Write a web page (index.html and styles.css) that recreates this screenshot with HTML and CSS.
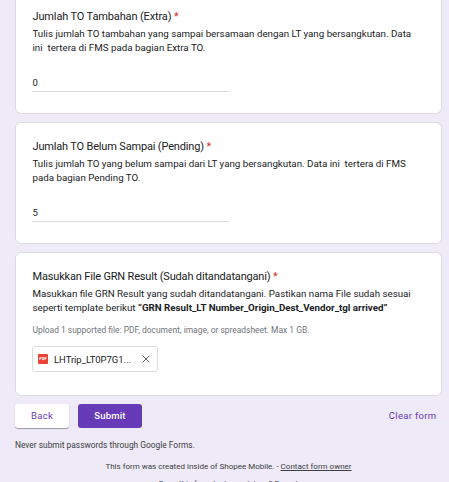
FILE: index.html
```html
<!DOCTYPE html>
<html lang="id">
<head>
<meta charset="utf-8">
<title>Form</title>
<link rel="stylesheet" href="styles.css">
</head>
<body>
<main class="form">
  <section class="card card-first">
    <h2 class="title title-extra">Jumlah TO Tambahan (Extra) <span class="req">*</span></h2>
    <p class="desc">Tulis jumlah TO tambahan yang sampai bersamaan dengan LT yang bersangkutan. Data<br>ini&nbsp; tertera di FMS pada bagian Extra TO.</p>
    <div class="answer">0</div>
  </section>
  <section class="card card-second">
    <h2 class="title">Jumlah TO Belum Sampai (Pending) <span class="req">*</span></h2>
    <p class="desc">Tulis jumlah TO yang belum sampai dari LT yang bersangkutan. Data ini&nbsp; tertera di FMS<br>pada bagian Pending TO.</p>
    <div class="answer">5</div>
  </section>
  <section class="card card-third">
    <h2 class="title">Masukkan File GRN Result (Sudah ditandatangani) <span class="req">*</span></h2>
    <p class="desc">Masukkan file GRN Result yang sudah ditandatangani. Pastikan nama File sudah sesuai<br>seperti template berikut <b>“GRN Result_LT Number_Origin_Dest_Vendor_tgl arrived”</b></p>
    <p class="hint">Upload 1 supported file: PDF, document, image, or spreadsheet. Max 1 GB.</p>
    <div class="file">
      <span class="pdf">PDF</span>
      <span class="name">LHTrip_LT0P7G1...</span>
      <svg class="close" viewBox="0 0 8 8"><path d="M.6.6l6.8 6.8M7.4.6L.6 7.4"/></svg>
    </div>
  </section>
  <div class="actions">
    <button class="btn back">Back</button>
    <button class="btn submit">Submit</button>
    <a class="clear">Clear form</a>
  </div>
  <p class="note">Never submit passwords through Google Forms.</p>
  <p class="origin">This form was created inside of Shopee Mobile. - <a class="owner">Contact form owner</a></p>
  <p class="report">Does this form look suspicious? Report</p>
</main>
</body>
</html>
```
FILE: styles.css
```css
* { box-sizing: border-box; }
html, body { height: 100%; overflow: hidden; }
body { margin: 0; background: #eeeaf7; color: #202124; font-family: Roboto, "Liberation Sans", sans-serif; }
h2, p { margin: 0; font-weight: 400; white-space: nowrap; }
.form { width: 427px; margin-left: 15px; }
.card { background: #fff; border: 1px solid #dadce0; border-radius: 6px; padding: 16px 16px 0; margin-bottom: 8px; }
.card-first { height: 114px; border-top: 0; border-radius: 0 0 6px 6px; padding-top: 9px; }
.card-second { height: 122px; }
.card-third { height: 144px; margin-bottom: 7px; }
.title, .desc, .hint { padding-left: .5px; }
.title { font-size: 11px; line-height: 15px; letter-spacing: -.17px; }
.title-extra { letter-spacing: -.14px; }
.req { color: #d93025; }
.desc { font-size: 9.75px; line-height: 14px; margin-top: 3px; }
.answer { width: 197px; height: 19px; margin-top: 18px; padding-left: .5px; border-bottom: 1px solid #dadada; font-size: 9.5px; line-height: 20px; }
.hint { color: #70757a; font-size: 8.45px; line-height: 12px; margin-top: 9px; }
.file { display: flex; align-items: center; width: 126px; height: 26px; margin-top: 10px; padding: 0 7px 0 5px; border: 1px solid #dadce0; border-radius: 3px; }
.pdf { width: 10px; height: 10px; border-radius: 1px; background: #ea4335; color: #fff; font-size: 4px; font-weight: 900; line-height: 10px; text-align: center; }
.name { margin-left: 6px; font-size: 9.5px; letter-spacing: -.05px; }
.close { width: 8px; height: 8px; margin-left: auto; fill: none; stroke: #5f6368; stroke-width: 1; }
.actions { display: flex; align-items: center; height: 25px; }
.btn { height: 24px; border: 0; border-radius: 3px; padding: 0; font: 500 9.5px/24px Roboto, sans-serif; letter-spacing: .2px; }
.back { width: 54px; background: #fff; color: #673ab7; font-weight: 400; letter-spacing: .3px; box-shadow: 0 1px 1px rgba(0,0,0,.35); }
.submit { width: 64px; margin-left: 9px; background: #673ab7; color: #fff; }
.clear { margin: 0 5.5px 0 auto; color: #673ab7; font-size: 9.5px; letter-spacing: .32px; }
.note { margin-top: 11px; font-size: 8.4px; line-height: 12px; color: #3c4043; }
.origin { margin-top: 10px; font-size: 8px; line-height: 12px; text-align: center; color: #3c4043; }
.owner { text-decoration: underline; }
.report { margin-top: 5px; font-size: 8px; line-height: 12px; text-align: center; color: #3c4043; }
```
